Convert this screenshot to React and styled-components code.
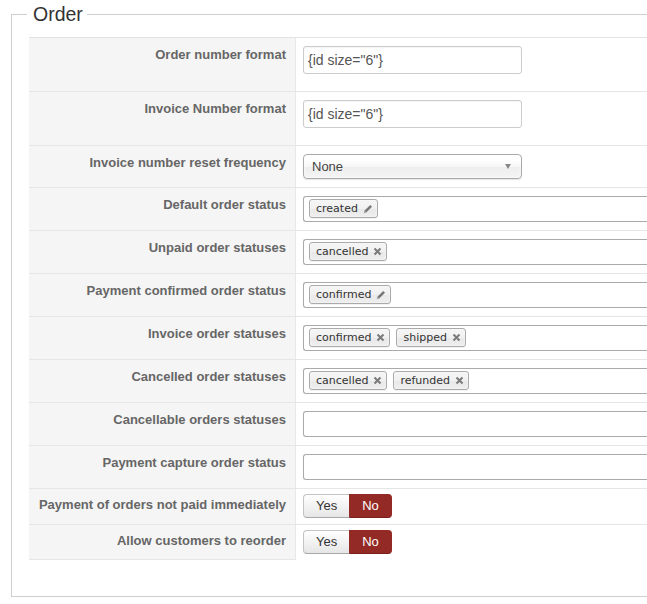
import React from "react";
import styled, { createGlobalStyle } from "styled-components";

const Global = createGlobalStyle`
  html, body { margin: 0; padding: 0; background: #fff; overflow: hidden; }
  body { font-family: "Liberation Sans", Arial, sans-serif; }
`;

const Page = styled.div`
  width: 780px;
  padding-left: 11px;
`;

const Fieldset = styled.fieldset`
  margin: 0;
  border: 1px solid #cfcfcf;
  padding: 9px 0 36px 17px;
  min-width: 0;
`;

const Legend = styled.legend`
  font-size: 19.5px;
  line-height: 28px;
  color: #333;
  padding: 0 4px 0 6px;
  margin-left: -2px;
`;

const Table = styled.div`
  display: flex;
  flex-direction: column;
  border-top: 1px solid #e3e3e3;
`;

const Row = styled.div`
  display: grid;
  grid-template-columns: 267px 1fr;
  & + & { border-top: 1px solid #e6e6e6; }
`;

const Label = styled.div`
  box-sizing: border-box;
  background: #f5f5f5;
  border-right: 1px solid #e8e8e8;
  border-bottom: ${p => (p.$last ? "1px solid #e6e6e6" : "none")};
  padding: ${p => (p.$compact ? "8px" : "9px")} 9px 0 0;
  text-align: right;
  font-size: 13px;
  line-height: 16px;
  font-weight: bold;
  color: #666;
  white-space: nowrap;
`;

const Value = styled.div`
  padding: ${p => (p.$compact ? "5px 0 6px 7px" : "8px 0 8px 7px")};
  display: flex;
  align-items: flex-start;
`;

const TextInput = styled.div`
  box-sizing: border-box;
  width: 219px;
  height: 28px;
  margin-bottom: 9px;
  border: 1px solid #ccc;
  border-radius: 3px;
  padding: 0 4px;
  font-size: 14px;
  line-height: 26px;
  color: #555;
  box-shadow: inset 0 1px 1px rgba(0, 0, 0, 0.04);
`;

const Select = styled.div`
  box-sizing: border-box;
  width: 219px;
  height: 25px;
  border: 1px solid #aaa;
  border-radius: 4px;
  padding: 0 8px;
  display: flex;
  align-items: center;
  justify-content: space-between;
  font-size: 13px;
  color: #444;
  background: linear-gradient(#fff 20%, #f6f6f6 50%, #eee 52%, #f4f4f4 100%);
  box-shadow: 0 0 3px #fff inset, 0 1px 1px rgba(0, 0, 0, 0.1);
`;

const Arrow = styled.span`
  width: 0;
  height: 0;
  border-left: 3.5px solid transparent;
  border-right: 3.5px solid transparent;
  border-top: 5px solid #888;
  margin-right: 2px;
`;

const TagBox = styled.div`
  box-sizing: border-box;
  flex: 1;
  height: 26px;
  border: 1px solid #aaa;
  border-radius: 3px 0 0 3px;
  border-right: none;
  padding: 2px 5px 0;
  display: flex;
  align-items: flex-start;
  gap: 6px;
  background: #fff;
`;

const Chip = styled.span`
  box-sizing: border-box;
  height: 19px;
  display: inline-flex;
  align-items: center;
  gap: 5px;
  padding: 0 4px 0 6px;
  border: 1px solid #aaa;
  border-radius: 3px;
  font-family: "DejaVu Sans", Verdana, sans-serif;
  font-size: 11px;
  color: #333;
  background: linear-gradient(#f4f4f4 20%, #f0f0f0 50%, #e8e8e8 52%, #eee 100%);
  box-shadow: 0 0 2px #fff inset, 0 1px 0 rgba(0, 0, 0, 0.05);
`;

const Toggle = styled.div`
  display: inline-flex;
  height: 24px;
`;

const ToggleBtn = styled.span`
  box-sizing: border-box;
  height: 24px;
  padding: 0 12px;
  font-size: 13px;
  line-height: 22px;
  border: 1px solid ${p => (p.$active ? "#942a25" : "#c4c4c4")};
  border-bottom-color: ${p => (p.$active ? "#7a211d" : "#a8a8a8")};
  color: ${p => (p.$active ? "#fff" : "#333")};
  background: ${p =>
    p.$active ? "#942a25" : "linear-gradient(#ffffff, #e6e6e6)"};
  border-radius: ${p => (p.$active ? "0 4px 4px 0" : "4px 0 0 4px")};
  ${p => (p.$active ? "" : "border-right: none;")}
`;

const Pencil = () => (
  <svg width="10" height="10" viewBox="0 0 10 10">
    <path d="M3.2 8.6 L9 2.8 L7.2 1 L1.4 6.8 Z" fill="#777" />
    <path d="M1.4 6.8 L3.2 8.6 L0.8 9.2 Z" fill="#999" />
  </svg>
);

const Close = () => (
  <svg width="9" height="9" viewBox="0 0 9 9">
    <path d="M1.5 1.5 L7.5 7.5 M7.5 1.5 L1.5 7.5" stroke="#7a7a7a" strokeWidth="2" />
  </svg>
);

const Tags = ({ items }) => (
  <TagBox>
    {items.map(([t, icon]) => (
      <Chip key={t}>
        {t}
        {icon === "edit" ? <Pencil /> : <Close />}
      </Chip>
    ))}
  </TagBox>
);

const YesNo = () => (
  <Toggle>
    <ToggleBtn>Yes</ToggleBtn>
    <ToggleBtn $active>No</ToggleBtn>
  </Toggle>
);

const rows = [
  { label: "Order number format", el: <TextInput>{'{id size="6"}'}</TextInput> },
  { label: "Invoice Number format", el: <TextInput>{'{id size="6"}'}</TextInput> },
  { label: "Invoice number reset frequency", el: <Select>None<Arrow /></Select> },
  { label: "Default order status", el: <Tags items={[["created", "edit"]]} /> },
  { label: "Unpaid order statuses", el: <Tags items={[["cancelled", "x"]]} /> },
  { label: "Payment confirmed order status", el: <Tags items={[["confirmed", "edit"]]} /> },
  { label: "Invoice order statuses", el: <Tags items={[["confirmed", "x"], ["shipped", "x"]]} /> },
  { label: "Cancelled order statuses", el: <Tags items={[["cancelled", "x"], ["refunded", "x"]]} /> },
  { label: "Cancellable orders statuses", el: <Tags items={[]} /> },
  { label: "Payment capture order status", el: <Tags items={[]} /> },
  { label: "Payment of orders not paid immediately", el: <YesNo />, compact: true },
  { label: "Allow customers to reorder", el: <YesNo />, compact: true },
];

export default function App() {
  return (
    <Page>
      <Global />
      <Fieldset>
        <Legend>Order</Legend>
        <Table>
          {rows.map((r, i) => (
            <Row key={r.label}>
              <Label $compact={r.compact} $last={i === rows.length - 1}>{r.label}</Label>
              <Value $compact={r.compact}>{r.el}</Value>
            </Row>
          ))}
        </Table>
      </Fieldset>
    </Page>
  );
}
